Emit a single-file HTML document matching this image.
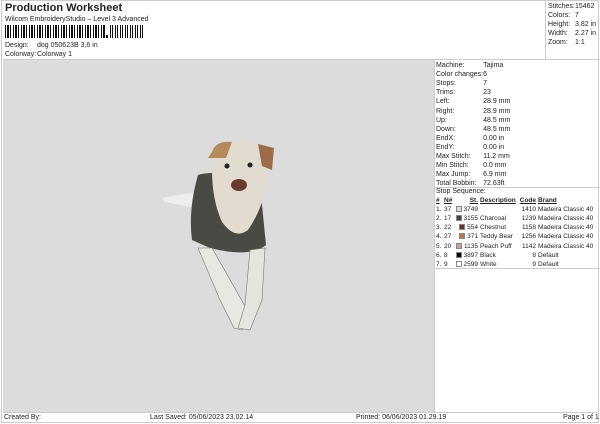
<!DOCTYPE html>
<html><head><style>
*{margin:0;padding:0;box-sizing:border-box}
body{width:600px;height:424px;background:#fff;font-family:"Liberation Sans",sans-serif;color:#222;position:relative;overflow:hidden;font-size:7px}
.a{position:absolute;white-space:nowrap;line-height:9px}
.bc{position:absolute;left:5px;top:25px;height:13px;width:100px;background:repeating-linear-gradient(90deg,#111 0 1px,#fff 1px 2px,#111 2px 4px,#fff 4px 5px,#111 5px 6px,#fff 6px 8px)}
table{border-collapse:collapse;font-size:7px}
td{padding:0;height:9.1px;line-height:9px;white-space:nowrap}
.st td{font-size:6.5px}
.sw{display:inline-block;width:6px;height:6px;vertical-align:-1px;border:1px solid #888}
</style></head><body>
<div style="position:absolute;left:1px;top:0;width:598px;height:423px;border:1px solid #ccc"></div>
<div class="a" style="left:5px;top:2px;font-size:11px;font-weight:bold;line-height:13px">Production Worksheet</div>
<div class="a" style="left:5px;top:15px">Wilcom EmbroideryStudio – Level 3 Advanced</div>
<div class="bc"></div>
<div style="position:absolute;left:106px;top:35px;width:2px;height:3px;background:#111"></div>
<div style="position:absolute;left:110px;top:25px;width:34px;height:13px;background:repeating-linear-gradient(90deg,#111 0 1px,#fff 1px 2px,#111 2px 3px,#fff 3px 5px)"></div>
<div class="a" style="left:5px;top:41px">Design:</div><div class="a" style="left:37px;top:41px">dog 050623B 3,6 in</div>
<div class="a" style="left:5px;top:50px">Colorway:</div><div class="a" style="left:37px;top:50px">Colorway 1</div>
<div style="position:absolute;left:545px;top:0;width:1px;height:59px;background:#ccc"></div>
<div style="position:absolute;left:3px;top:59px;width:596px;height:1px;background:#ccc"></div>
<table style="position:absolute;left:548px;top:2px"><tr><td style="width:27px">Stitches:</td><td>15462</td></tr><tr><td>Colors:</td><td>7</td></tr><tr><td>Height:</td><td>3.82 in</td></tr><tr><td>Width:</td><td>2.27 in</td></tr><tr><td>Zoom:</td><td>1:1</td></tr></table>
<div style="position:absolute;left:3px;top:60px;width:431px;height:352px;background:#dcdcdc"></div>
<svg style="position:absolute;left:150px;top:130px" width="140" height="210" viewBox="0 0 140 210">
<path d="M12 68 L45 62 L46 78 L15 72Z" fill="#eee"/>
<path d="M48 45 Q70 38 110 55 L116 115 Q100 128 60 118 L42 110 Q38 80 48 45Z" fill="#4a4a45"/>
<path d="M48 118 L62 118 L100 185 L92 200 L84 198 L70 170Z" fill="#e8e8e2" stroke="#777" stroke-width=".6"/>
<path d="M100 120 L115 118 L112 170 L100 200 L88 198 L95 175Z" fill="#e5e5df" stroke="#777" stroke-width=".6"/>
<path d="M68 18 Q90 5 112 15 L118 50 Q112 80 98 100 Q85 110 72 92 Q62 70 62 40Z" fill="#e2dcd0"/>
<path d="M62 22 Q66 10 82 12 L76 28 L58 28Z" fill="#b58a5a"/>
<path d="M108 14 L124 18 L122 40 L112 36Z" fill="#9c6c48"/>
<circle cx="77" cy="36" r="2.5" fill="#222"/><circle cx="100" cy="35" r="2.5" fill="#222"/>
<ellipse cx="89" cy="55" rx="8" ry="6" fill="#6a3a30"/>
</svg>
<div style="position:absolute;left:434px;top:60px;width:1px;height:352px;background:#ccc"></div>
<table style="position:absolute;left:436px;top:61px"><tr><td style="width:47px">Machine:</td><td>Tajima</td></tr><tr><td>Color changes:</td><td>6</td></tr><tr><td>Stops:</td><td>7</td></tr><tr><td>Trims:</td><td>23</td></tr><tr><td>Left:</td><td>28.9 mm</td></tr><tr><td>Right:</td><td>28.9 mm</td></tr><tr><td>Up:</td><td>48.5 mm</td></tr><tr><td>Down:</td><td>48.5 mm</td></tr><tr><td>EndX:</td><td>0.00 in</td></tr><tr><td>EndY:</td><td>0.00 in</td></tr><tr><td>Max Stitch:</td><td>11.2 mm</td></tr><tr><td>Min Stitch:</td><td>0.0 mm</td></tr><tr><td>Max Jump:</td><td>6.9 mm</td></tr><tr><td>Total Bobbin:</td><td>72.63ft</td></tr></table>
<div style="position:absolute;left:434px;top:187px;width:165px;height:1px;background:#ccc"></div>
<div class="a" style="left:436px;top:187px">Stop Sequence:</div>
<table class="st" style="position:absolute;left:436px;top:196px">
<tr style="font-weight:bold;text-decoration:underline"><td style="width:8px">#</td><td style="width:10px">N#</td><td style="width:24px;text-align:right">St.</td><td style="width:40px;padding-left:2px">Description</td><td style="width:18px;text-align:right">Code</td><td style="padding-left:2px">Brand</td></tr>
<tr><td>1.</td><td>37</td><td style="text-align:right"><span class="sw" style="background:#ddd"></span> 3749</td><td></td><td style="text-align:right">1410</td><td style="padding-left:2px">Madeira Classic 40</td></tr>
<tr><td>2.</td><td>17</td><td style="text-align:right"><span class="sw" style="background:#4a4440"></span> 3155</td><td style="padding-left:2px">Charcoal</td><td style="text-align:right">1239</td><td style="padding-left:2px">Madeira Classic 40</td></tr>
<tr><td>3.</td><td>22</td><td style="text-align:right"><span class="sw" style="background:#6b2d20"></span> 554</td><td style="padding-left:2px">Chestnut</td><td style="text-align:right">1158</td><td style="padding-left:2px">Madeira Classic 40</td></tr>
<tr><td>4.</td><td>27</td><td style="text-align:right"><span class="sw" style="background:#b07a44"></span> 371</td><td style="padding-left:2px">Teddy Bear</td><td style="text-align:right">1256</td><td style="padding-left:2px">Madeira Classic 40</td></tr>
<tr><td>5.</td><td>20</td><td style="text-align:right"><span class="sw" style="background:#c8a090"></span> 1135</td><td style="padding-left:2px">Peach Puff</td><td style="text-align:right">1142</td><td style="padding-left:2px">Madeira Classic 40</td></tr>
<tr><td>6.</td><td>8</td><td style="text-align:right"><span class="sw" style="background:#000"></span> 3897</td><td style="padding-left:2px">Black</td><td style="text-align:right">8</td><td style="padding-left:2px">Default</td></tr>
<tr><td>7.</td><td>9</td><td style="text-align:right"><span class="sw" style="background:#fff"></span> 2599</td><td style="padding-left:2px">White</td><td style="text-align:right">9</td><td style="padding-left:2px">Default</td></tr>
</table>
<div style="position:absolute;left:434px;top:268px;width:165px;height:1px;background:#ccc"></div>
<div style="position:absolute;left:3px;top:412px;width:596px;height:1px;background:#ccc"></div>
<div class="a" style="left:4px;top:413px">Created By:</div>
<div class="a" style="left:150px;top:413px">Last Saved: 05/06/2023 23.02.14</div>
<div class="a" style="left:356px;top:413px">Printed: 06/06/2023 01.29.19</div>
<div class="a" style="left:563px;top:413px">Page 1 of 1</div>
</body></html>
